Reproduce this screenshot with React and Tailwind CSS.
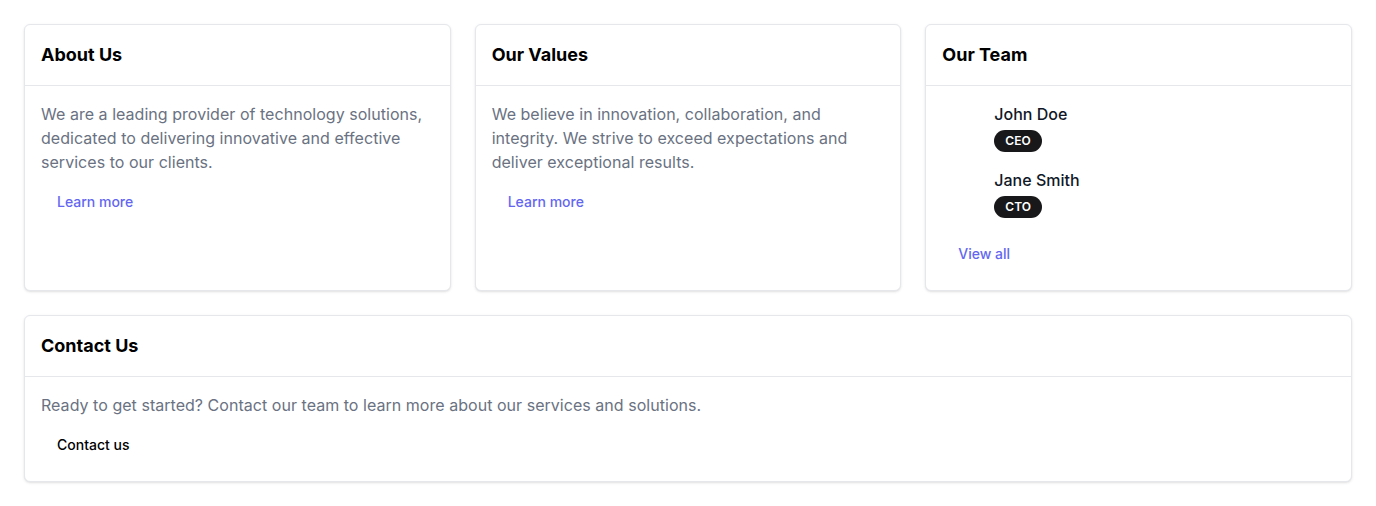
export default function App() {
  const card = "bg-white border border-gray-200 rounded-md shadow-sm flex flex-col";
  const header = "px-4 py-4 border-b border-gray-200";
  const title = "text-lg leading-7 font-bold text-black";
  const body = "p-4 flex flex-col items-start";
  const text = "text-base leading-6 text-gray-500 tracking-[0.035px]";
  const btn = "h-10 px-4 py-2 text-sm leading-5 font-medium rounded-md mt-2 flex items-center";
  return (
    <div className="min-h-screen bg-white p-6" style={{ fontFamily: 'Inter, "Noto Sans", sans-serif' }}>
      <div className="grid grid-cols-3 gap-6">
        <div className={card}>
          <div className={header}><h2 className={title}>About Us</h2></div>
          <div className={body}>
            <p className={text}>We are a leading provider of technology solutions, dedicated to delivering innovative and effective services to our clients.</p>
            <button className={btn + " text-[#6366f1]"}>Learn more</button>
          </div>
        </div>
        <div className={card}>
          <div className={header}><h2 className={title}>Our Values</h2></div>
          <div className={body}>
            <p className={text}>We believe in innovation, collaboration, and integrity. We strive to exceed expectations and deliver exceptional results.</p>
            <button className={btn + " text-[#6366f1]"}>Learn more</button>
          </div>
        </div>
        <div className={card}>
          <div className={header}><h2 className={title}>Our Team</h2></div>
          <div className={body}>
            <div className="flex flex-col gap-4">
              {[["John Doe", "CEO"], ["Jane Smith", "CTO"]].map(([n, r]) => (
                <div key={n} className="flex items-start gap-3">
                  <div className="w-10 h-10 shrink-0"></div>
                  <div className="flex flex-col items-start">
                    <span className="text-base leading-6 font-medium text-gray-900">{n}</span>
                    <span className="mt-1 px-[11px] py-[3px] rounded-full bg-zinc-900 text-white text-xs leading-4 font-semibold">{r}</span>
                  </div>
                </div>
              ))}
            </div>
            <button className={btn + " mt-4 text-[#6366f1]"}>View all</button>
          </div>
        </div>
      </div>
      <div className={card + " mt-6"}>
        <div className={header}><h2 className={title}>Contact Us</h2></div>
        <div className={body}>
          <p className={text}>Ready to get started? Contact our team to learn more about our services and solutions.</p>
          <button className={btn + " text-black"}>Contact us</button>
        </div>
      </div>
    </div>
  );
}
